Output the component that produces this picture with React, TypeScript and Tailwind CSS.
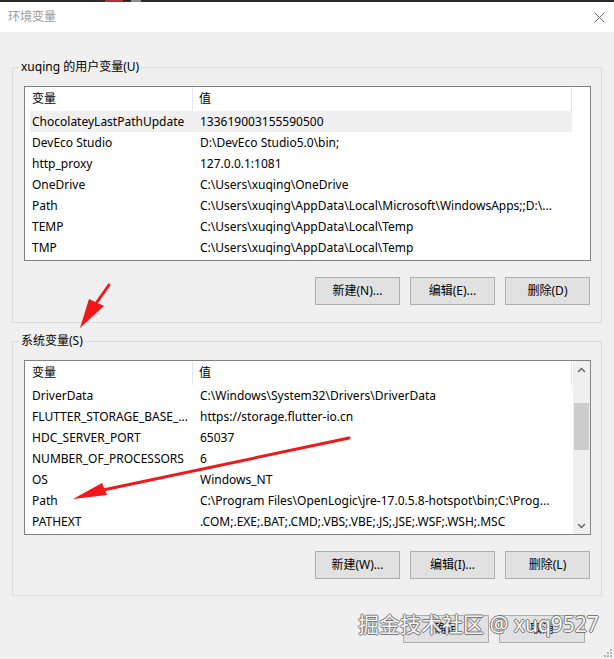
import React from "react";

const FONT = { fontFamily: '"Noto Sans", "Noto Sans CJK SC", sans-serif' };

type Row = [string, string];

const userRows: Row[] = [
  ["ChocolateyLastPathUpdate", "133619003155590500"],
  ["DevEco Studio", "D:\\DevEco Studio5.0\\bin;"],
  ["http_proxy", "127.0.0.1:1081"],
  ["OneDrive", "C:\\Users\\xuqing\\OneDrive"],
  ["Path", "C:\\Users\\xuqing\\AppData\\Local\\Microsoft\\WindowsApps;;D:\\..."],
  ["TEMP", "C:\\Users\\xuqing\\AppData\\Local\\Temp"],
  ["TMP", "C:\\Users\\xuqing\\AppData\\Local\\Temp"],
];

const sysRows: Row[] = [
  ["DriverData", "C:\\Windows\\System32\\Drivers\\DriverData"],
  ["FLUTTER_STORAGE_BASE_...", "https://storage.flutter-io.cn"],
  ["HDC_SERVER_PORT", "65037"],
  ["NUMBER_OF_PROCESSORS", "6"],
  ["OS", "Windows_NT"],
  ["Path", "C:\\Program Files\\OpenLogic\\jre-17.0.5.8-hotspot\\bin;C:\\Prog..."],
  ["PATHEXT", ".COM;.EXE;.BAT;.CMD;.VBS;.VBE;.JS;.JSE;.WSF;.WSH;.MSC"],
];

function Header() {
  return (
    <div className="flex h-[24px] items-center bg-white w-[547px]">
      <div className="w-[168px] h-full flex items-center pl-[7px] border-r border-[#e5e5e5]">变量</div>
      <div className="flex-1 h-full flex items-center pl-[6px] border-r border-[#e5e5e5]">值</div>
    </div>
  );
}

function Rows({ rows, selected }: { rows: Row[]; selected?: number }) {
  return (
    <div className="flex flex-col pl-[5px]">
      {rows.map((r, i) => (
        <div
          key={i}
          className={`flex h-[21px] items-center w-[542px] whitespace-nowrap ${i === selected ? "bg-[#f0f0f0]" : ""}`}
        >
          <div className="w-[163px] pl-[2px] overflow-hidden">{r[0]}</div>
          <div className="flex-1 pl-[7px] overflow-hidden">{r[1]}</div>
        </div>
      ))}
    </div>
  );
}

function Btn({ label, w = "w-[85px]" }: { label: string; w?: string }) {
  return (
    <div className={`${w} h-[28px] bg-[#e1e1e1] border border-[#adadad] flex items-center justify-center`}>
      {label}
    </div>
  );
}

function Chevron({ up }: { up?: boolean }) {
  return (
    <svg width="9" height="6" viewBox="0 0 9 6">
      <polyline
        points={up ? "1,5 4.5,1.5 8,5" : "1,1 4.5,4.5 8,1"}
        fill="none"
        stroke="#606060"
        strokeWidth="1.3"
      />
    </svg>
  );
}

export default function App() {
  return (
    <div className="relative w-[614px] h-[659px] overflow-hidden bg-[#f0f0f0] text-[12px] text-black" style={FONT}>
      {/* top strip */}
      <div className="h-[2px] bg-[#2a2a2a] flex">
        <div className="ml-[105px] w-[18px] bg-[#b03030]" />
        <div className="ml-[8px] w-[10px] bg-[#8a8a8a]" />
      </div>
      {/* title bar */}
      <div className="h-[30px] bg-white flex items-center justify-between pl-[8px] pr-[9px]">
        <span className="text-[#9a9a9a] text-[12px]">环境变量</span>
        <svg width="11" height="11" viewBox="0 0 11 11">
          <path d="M0.5 0.5 L10.5 10.5 M10.5 0.5 L0.5 10.5" stroke="#6a6a6a" strokeWidth="1" />
        </svg>
      </div>

      <div className="px-[12px]">
        {/* user group */}
        <div className="relative mt-[35px] h-[256px] border border-[#dcdcdc] pt-[18px] pl-[11px] pr-[10px]">
          <span className="absolute -top-[10px] left-[6px] px-[2px] bg-[#f0f0f0] leading-[18px]">xuqing 的用户变量(U)</span>
          <div className="h-[175px] border border-[#828282] bg-white">
            <Header />
            <Rows rows={userRows} selected={0} />
          </div>
          <div className="flex justify-end gap-[10px] mt-[16px] pr-[1px]">
            <Btn label="新建(N)..." />
            <Btn label="编辑(E)..." />
            <Btn label="删除(D)" />
          </div>
        </div>

        {/* system group */}
        <div className="relative mt-[18px] h-[255px] border border-[#dcdcdc] pt-[18px] pl-[11px] pr-[10px]">
          <span className="absolute -top-[10px] left-[6px] px-[2px] bg-[#f0f0f0] leading-[18px]">系统变量(S)</span>
          <div className="h-[175px] border border-[#828282] bg-white flex">
            <div className="w-[548px]">
              <Header />
              <Rows rows={sysRows} />
            </div>
            <div className="w-[17px] bg-[#f0f0f0] flex flex-col">
              <div className="h-[17px] flex items-center justify-center">
                <Chevron up />
              </div>
              <div className="mt-[25px] mx-auto w-[15px] h-[47px] bg-[#cdcdcd]" />
              <div className="flex-1" />
              <div className="h-[17px] flex items-center justify-center">
                <Chevron />
              </div>
            </div>
          </div>
          <div className="flex justify-end gap-[10px] mt-[16px] pr-[1px]">
            <Btn label="新建(W)..." />
            <Btn label="编辑(I)..." />
            <Btn label="删除(L)" />
          </div>
        </div>
      </div>

      {/* OK / Cancel */}
      <div className="flex justify-end gap-[10px] mt-[19px] pr-[29px]">
        <Btn label="确定" w="w-[86px]" />
        <Btn label="取消" w="w-[86px]" />
      </div>

      {/* resize grip */}
      <svg className="absolute right-[1px] bottom-[1px]" width="10" height="10" viewBox="0 0 10 10">
        <rect x="7" y="1" width="2" height="2" fill="#b5b5b5" />
        <rect x="4" y="4" width="2" height="2" fill="#b5b5b5" />
        <rect x="7" y="4" width="2" height="2" fill="#b5b5b5" />
        <rect x="1" y="7" width="2" height="2" fill="#b5b5b5" />
        <rect x="4" y="7" width="2" height="2" fill="#b5b5b5" />
        <rect x="7" y="7" width="2" height="2" fill="#b5b5b5" />
      </svg>

      {/* red arrows */}
      <svg className="absolute left-0 top-0 pointer-events-none" width="614" height="659" viewBox="0 0 614 659">
        <line x1="109" y1="285" x2="97" y2="302" stroke="#f01818" strokeWidth="3" strokeLinecap="round" />
        <polygon points="80,328 89,299 104,306" fill="#f01818" />
        <line x1="349" y1="438" x2="103" y2="490" stroke="#f01818" strokeWidth="3" strokeLinecap="round" />
        <polygon points="73,499 102,483 107,495" fill="#f01818" />
      </svg>

      {/* watermark */}
      <div
        className="absolute left-[358px] top-[609px] text-[21px] leading-[30px] text-[#f4f4f4] whitespace-nowrap [text-shadow:1px_0_0_#777,-1px_0_0_#777,0_1px_0_#777,0_-1px_0_#777]"
      >
        掘金技术社区 @ xuq9527
      </div>
    </div>
  );
}
